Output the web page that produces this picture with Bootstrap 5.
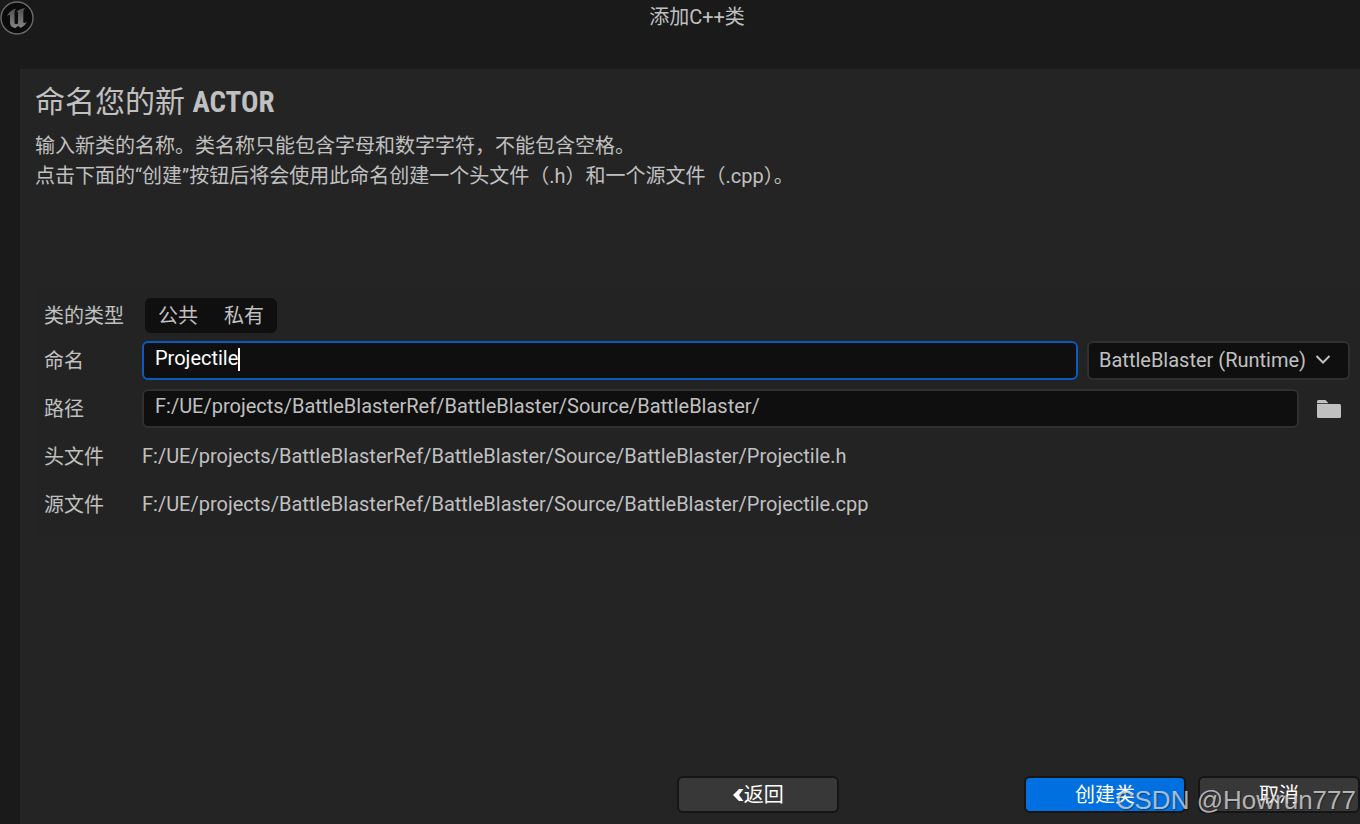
<!DOCTYPE html>
<html lang="zh-CN">
<head>
<meta charset="utf-8">
<meta name="viewport" content="width=device-width, initial-scale=1">
<title>添加C++类</title>
<link href="https://cdn.jsdelivr.net/npm/bootstrap@5.3.0/dist/css/bootstrap.min.css" rel="stylesheet">
<style>
  body { background: #1a1a1a; color: #c0c0c0; font-family: Roboto, "Noto Sans CJK SC", sans-serif; font-size: 20px; font-weight: 400; line-height: 30px; }
  .title-bar { height: 69px; }
  .title-bar h1 { font-size: 20px; line-height: 34px; font-weight: 400; padding-left: 34px; }
  .engine-logo { left: 0; top: 1px; }
  .wizard { background: #242424; margin-left: 20px; }
  .page-body { padding: 15px 0 0 15px; }
  .wizard h2 { font-size: 30px; line-height: 36px; font-weight: 400; margin-bottom: 11px; }
  .wizard h2 b { font-family: "Roboto Condensed", Roboto, sans-serif; font-size: 29px; }
  .intro { min-height: 157px; }
  .fields { background: #232323; gap: 9px; padding: 9px 10px 11px 8px; margin-left: 1px; }
  .field-row { min-height: 39px; }
  .field-row.kind { min-height: 35px; margin-bottom: -1px; }
  .field-name { width: 98px; flex: none; }
  .file-path { line-height: 28px; padding-bottom: 2px; }
  .kind-group { background: #0f0f0f; border-radius: 6px; margin-left: 3px; height: 35px; }
  .kind-group .btn { color: #c0c0c0; font-size: 20px; line-height: 36px; padding: 0 13px; border: 0; }
  .box { background: #0f0f0f; color: #c0c0c0; border: 2px solid #303030; border-radius: 6px; height: 39px; font-size: 20px; line-height: 29px; padding: 0 11px 6px; }
  .box:focus, .box:hover { background: #0f0f0f; color: #c0c0c0; box-shadow: none; }
  .box.active-box { border-color: #0a5bbd; color: #fff; }
  .caret { left: 96px; top: 7px; width: 2px; height: 23px; background: #fff; }
  .module { width: 263px; flex: none; margin-left: 9px; }
  .module .box { padding: 0 10px; appearance: none; width: 100%; }
  .module svg { right: 19px; top: 13px; pointer-events: none; }
  .browse { width: 51px; flex: none; padding: 0 0 0 8px; }
  .actions { padding-bottom: 11px; }
  .back-cell { padding-right: 74px; }
  .act { width: 162px; height: 37px; flex: none; border: 2px solid #151515; border-radius: 6px; background: #383838; color: #fff; font-size: 20px; line-height: 30px; padding: 0; }
  .act.primary { background: #0070e0; }
  .watermark { right: 4px; bottom: 8px; font: 26px/32px "Liberation Sans", sans-serif; color: rgba(225,225,225,.75); text-shadow: 1px 1px 1px rgba(0,0,0,.4); pointer-events: none; }
</style>
</head>
<body>
<div class="d-flex flex-column min-vh-100 position-relative overflow-hidden">
  <header class="title-bar text-center position-relative">
    <svg class="engine-logo position-absolute" width="35" height="35" viewBox="0 0 35 35" aria-hidden="true">
      <defs><linearGradient id="metal" x1="0" y1="0" x2="0" y2="1"><stop offset="0" stop-color="#505050"/><stop offset="1" stop-color="#858585"/></linearGradient></defs>
      <circle cx="17" cy="17" r="16" fill="#0b0b0b" stroke="#6c6c6c" stroke-width="1.4"/>
      <path fill="url(#metal)" d="M7 15.500C8.500 11.500 11.500 8.500 16.500 7.500C14.800 9 14.500 10 14.500 12V21.500C14.500 23 16 24 18 22.500V12.500C18 10.800 17 10.800 16.300 11C18.500 8.500 21.500 7.500 25.500 7C23.800 8.500 23.300 9.800 23.300 12V20.500C23.300 22.500 24.500 22.500 27 20.500C25.500 24 23.500 25.500 20.500 27L18.300 24.700L15.500 27C12.500 26.500 10 25 10 21.500V14.500C10 13 8.500 13.500 7 15.500Z"/>
    </svg>
    <h1 class="m-0">添加C++类</h1>
  </header>

  <main class="wizard flex-grow-1 d-flex flex-column">
    <div class="page-body flex-grow-1">
      <section class="intro mb-5">
        <h2>命名您的新 <b>ACTOR</b></h2>
        <p class="mb-0">输入新类的名称。类名称只能包含字母和数字字符，不能包含空格。<br>点击下面的“创建”按钮后将会使用此命名创建一个头文件（.h）和一个源文件（.cpp）。</p>
      </section>

      <form class="fields d-flex flex-column">
        <div class="field-row kind d-flex align-items-center" role="group" aria-labelledby="kind">
          <span class="field-name" id="kind">类的类型</span>
          <div class="kind-group d-flex">
            <input class="btn-check" type="radio" name="kind" id="public"><label class="btn" for="public">公共</label>
            <input class="btn-check" type="radio" name="kind" id="private"><label class="btn" for="private">私有</label>
          </div>
        </div>
        <div class="field-row d-flex align-items-center">
          <label class="field-name" for="name">命名</label>
          <div class="position-relative flex-grow-1">
            <input class="form-control box active-box" id="name" type="text" value="Projectile">
            <span class="caret position-absolute"></span>
          </div>
          <div class="module position-relative">
            <select class="box" aria-label="模块"><option>BattleBlaster (Runtime)</option></select>
            <svg class="position-absolute" width="16" height="12" viewBox="0 0 16 12" fill="none" stroke="#c0c0c0" stroke-width="2" aria-hidden="true"><path d="M1.500 2L8 8.500L14.500 2"/></svg>
          </div>
        </div>
        <div class="field-row d-flex align-items-center">
          <label class="field-name" for="path">路径</label>
          <input class="form-control box flex-grow-1 w-auto" id="path" type="text" value="F:/UE/projects/BattleBlasterRef/BattleBlaster/Source/BattleBlaster/">
          <button class="btn border-0 browse d-flex justify-content-center" type="button" aria-label="浏览">
            <svg width="24" height="18" viewBox="0 0 24 18" fill="#c0c0c0"><path d="M0 3.200V1.500Q0 0 1.500 0H8.500L11.500 3.200Z"/><path d="M0 4H22.500Q24 4 24 5.500V16.500Q24 18 22.500 18H1.500Q0 18 0 16.500Z"/></svg>
          </button>
        </div>
        <div class="field-row d-flex align-items-center">
          <span class="field-name">头文件</span><span class="file-path">F:/UE/projects/BattleBlasterRef/BattleBlaster/Source/BattleBlaster/Projectile.h</span>
        </div>
        <div class="field-row d-flex align-items-center">
          <span class="field-name">源文件</span><span class="file-path">F:/UE/projects/BattleBlasterRef/BattleBlaster/Source/BattleBlaster/Projectile.cpp</span>
        </div>
      </form>
    </div>

    <footer class="actions row g-0">
      <div class="col-8 d-flex justify-content-end back-cell"><button class="act d-flex align-items-center justify-content-center" type="button"><svg width="11" height="14" viewBox="0 0 11 14" fill="#fff" aria-hidden="true"><path d="M6 1H10.500L6 7L10.500 13H6L0 7Z"/></svg>返回</button></div>
      <div class="col-4 d-flex justify-content-end"><button class="act primary me-2" type="button">创建类</button><button class="act ms-1" type="button">取消</button></div>
    </footer>
  </main>
  <div class="watermark position-absolute">CSDN @Howrun777</div>
</div>
<script src="https://cdn.jsdelivr.net/npm/bootstrap@5.3.0/dist/js/bootstrap.bundle.min.js"></script>
</body>
</html>
